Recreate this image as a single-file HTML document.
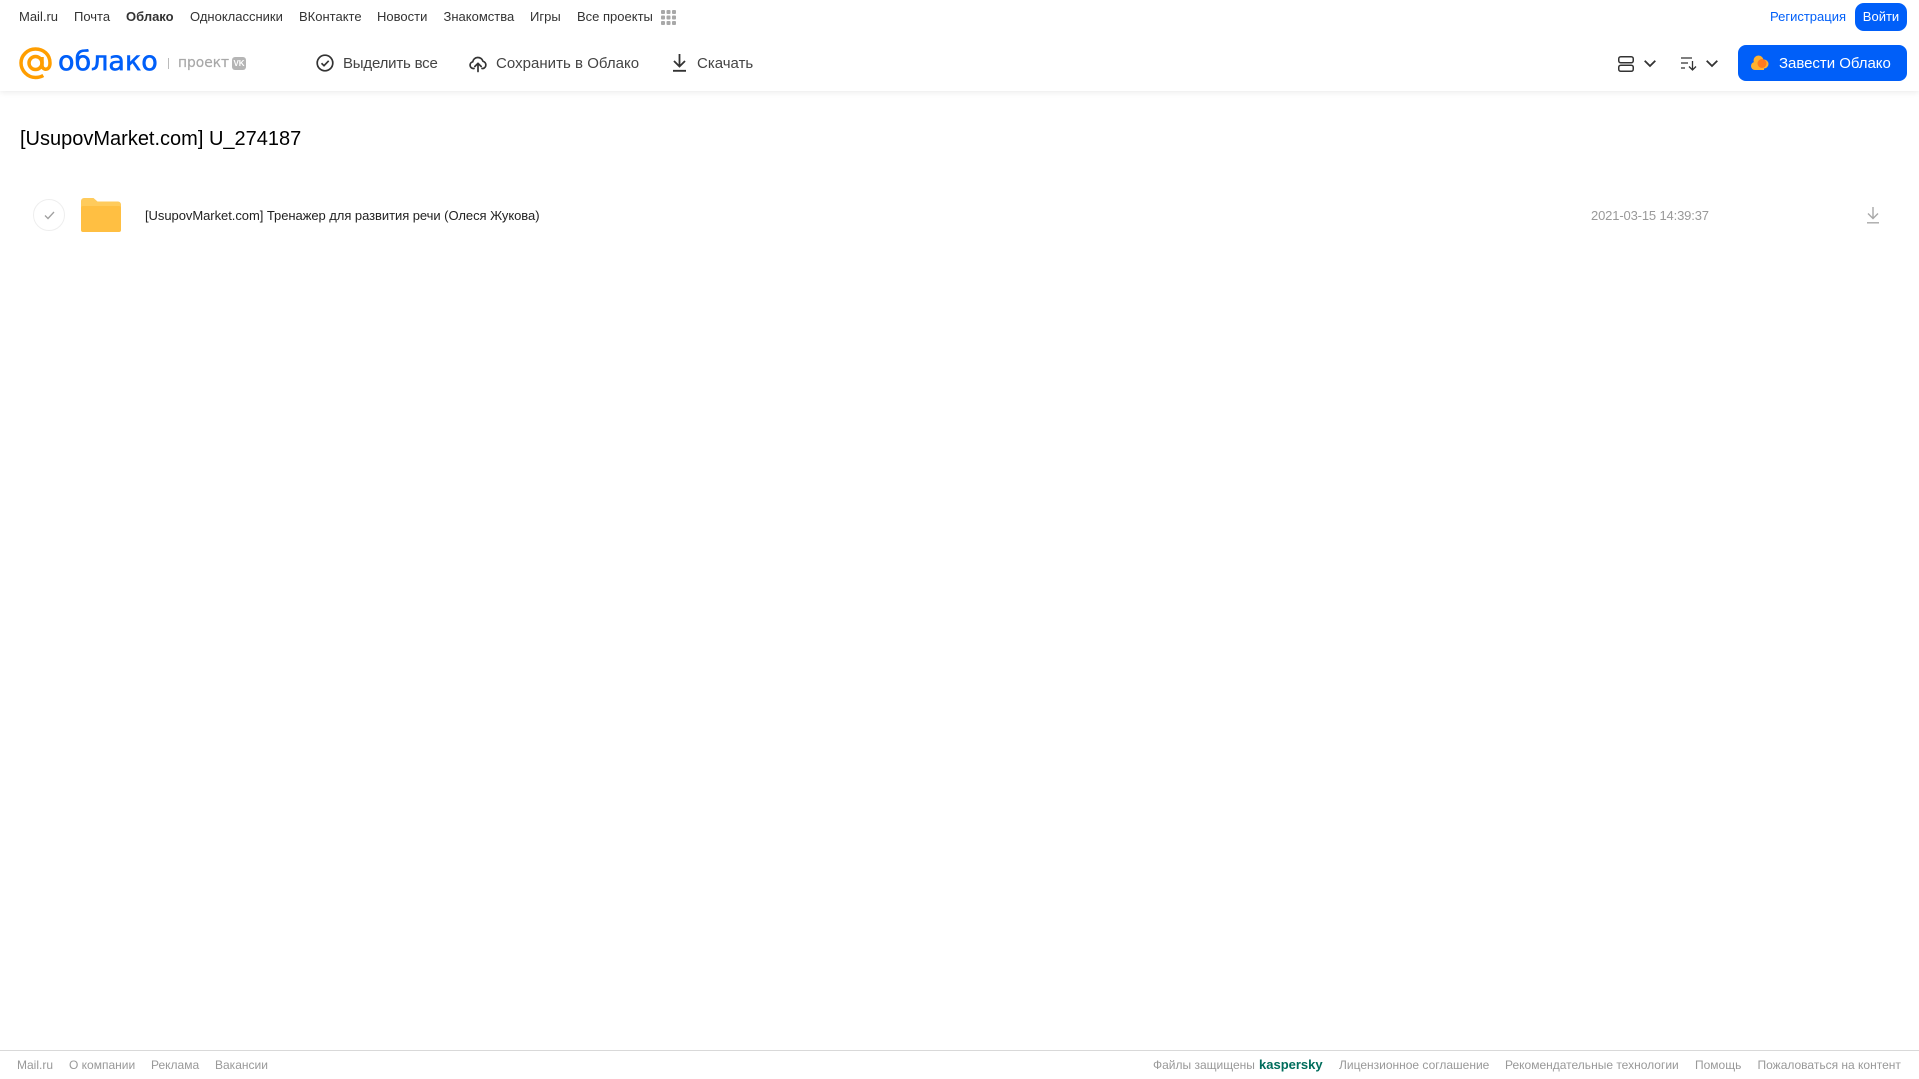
<!DOCTYPE html>
<html lang="ru"><head><meta charset="utf-8"><title>Облако</title>
<style>
html,body{margin:0;padding:0;background:#fff}
body{position:relative;width:1919px;height:1079px;overflow:hidden;font-family:"Liberation Sans",Arial,sans-serif}
.t{position:absolute;white-space:nowrap}
.n{font-size:13px;line-height:16px;top:9px;color:#333}
.b{font-size:15px;line-height:20px;top:53.500px;color:#444}
.f{font-size:12px;line-height:16px;top:1057px;color:#999}
svg{position:absolute;overflow:visible}
#sh{position:absolute;left:0;top:0;width:1919px;height:91px;background:#fff;box-shadow:0 1px 6px rgba(0,0,0,.09)}
</style></head><body>
<div id="sh"></div>
<span class="t n" style="left:19px">Mail.ru</span>
<span class="t n" style="left:74px">Почта</span>
<span class="t n" style="left:126px;font-weight:bold">Облако</span>
<span class="t n" style="left:190px">Одноклассники</span>
<span class="t n" style="left:299px">ВКонтакте</span>
<span class="t n" style="left:377px">Новости</span>
<span class="t n" style="left:443.500px">Знакомства</span>
<span class="t n" style="left:530px">Игры</span>
<span class="t n" style="left:577px">Все проекты</span>
<svg style="left:661px;top:10px" width="15" height="15" fill="#a8a8a8"><rect width="4" height="4" rx="1"/><rect x="5.500" width="4" height="4" rx="1"/><rect x="11" width="4" height="4" rx="1"/><rect y="5.500" width="4" height="4" rx="1"/><rect x="5.500" y="5.500" width="4" height="4" rx="1"/><rect x="11" y="5.500" width="4" height="4" rx="1"/><rect y="11" width="4" height="4" rx="1"/><rect x="5.500" y="11" width="4" height="4" rx="1"/><rect x="11" y="11" width="4" height="4" rx="1"/></svg>

<svg style="left:19px;top:47px" width="33" height="33" fill="none" stroke="#ff9e00" stroke-width="3.500"><circle cx="16.500" cy="16" r="6.500"/><path d="M23 10v8c0 2.800 1.800 4.200 3.800 4.200 2.500 0 4.200-2.400 4.200-6.200C31 7.500 24.500 2 16.500 2S2 8.500 2 16s6.500 14.500 14.500 14.500c3 0 5.500-.7 7.800-2"/></svg>
<span class="t" style="left:58px;top:44px;font-family:'DejaVu Sans',sans-serif;font-size:27px;line-height:36px;color:#005ff9;-webkit-text-stroke:.6px #005ff9">облако</span>
<div style="position:absolute;left:168px;top:58px;width:1px;height:11px;background:#bbb"></div>
<span class="t" style="left:178px;top:53px;font-family:'DejaVu Sans',sans-serif;font-size:13.800px;line-height:20px;color:#a8a8a8;-webkit-text-stroke:.2px #a8a8a8">проект</span>
<div class="t" style="left:232px;top:57px;width:14px;height:13px;border-radius:3px;background:#b5b5b5;color:#fff;font-size:8px;line-height:13px;text-align:center;font-weight:bold">VK</div>

<svg style="left:316px;top:54px" width="18" height="18" fill="none" stroke="#333" stroke-width="1.700"><circle cx="9" cy="9" r="7.800"/><path d="M5.500 9.300l2.500 2.400 4.700-4.900"/></svg>
<span class="t b" style="left:343px;letter-spacing:-.2px">Выделить все</span>
<svg style="left:469px;top:55px" width="18" height="17" fill="none" stroke="#333" stroke-width="1.700" stroke-linecap="round" stroke-linejoin="round"><path d="M5 13.500H4.200A3.400 3.400 0 0 1 3.700 6.800 5.300 5.300 0 0 1 14 6.300a3.700 3.700 0 0 1 0 7.200h-1"/><path d="M9 16.500V8.500M5.800 11.500L9 8.300l3.200 3.200"/></svg>
<span class="t b" style="left:496px;letter-spacing:.03px">Сохранить в Облако</span>
<svg style="left:672px;top:54px" width="15" height="18" fill="none" stroke="#333" stroke-width="1.800"><path d="M7.500 0v12M2 7l5.500 5.500L13 7M1 16.800h13"/></svg>
<span class="t b" style="left:697px">Скачать</span>

<span class="t n" style="left:1770px;color:#005ff9">Регистрация</span>
<div class="t" style="left:1855px;top:3px;width:52px;height:28px;border-radius:9px;background:#005ff9;color:#fff;font-size:13px;line-height:28px;text-align:center">Войти</div>

<svg style="left:1618px;top:56px" width="16" height="16" fill="none" stroke="#333" stroke-width="1.500"><rect x=".75" y=".75" width="14.500" height="6" rx="2"/><rect x=".75" y="9.250" width="14.500" height="6" rx="2"/></svg>
<svg style="left:1644px;top:60px" width="12" height="7" fill="none" stroke="#333" stroke-width="1.800"><path d="M.7.700L6 6l5.300-5.300"/></svg>
<svg style="left:1681px;top:57px" width="16" height="14" fill="none" stroke="#333" stroke-width="1.300"><path d="M0 1h11M0 6h7M0 11h4M11.500 4v9M8 9.500l3.500 3.500L15 9.500"/></svg>
<svg style="left:1706px;top:60px" width="12" height="7" fill="none" stroke="#333" stroke-width="1.800"><path d="M.7.700L6 6l5.300-5.300"/></svg>
<div style="position:absolute;left:1738px;top:45px;width:169px;height:36px;border-radius:8px;background:#005ff9"></div>
<svg style="left:1751px;top:55px" width="18" height="16"><g fill="#ffb12e"><circle cx="7.500" cy="5.500" r="5"/><circle cx="4" cy="11" r="4"/><circle cx="13" cy="9" r="4.500"/><rect x="4" y="9" width="9" height="6"/></g><circle cx="11" cy="8.500" r="4.500" fill="#ff7a1f"/></svg>
<span class="t" style="left:1779px;top:53.500px;font-size:15px;line-height:20px;color:#fff;letter-spacing:-.03px">Завести Облако</span>

<span class="t" style="left:20px;top:126.500px;font-size:20px;line-height:24px;color:#000">[UsupovMarket.com] U_274187</span>

<div style="position:absolute;left:33px;top:199px;width:30px;height:30px;border:1px solid #eee;border-radius:50%"></div>
<svg style="left:44px;top:211px" width="11" height="9" fill="none" stroke="#a0a0a0" stroke-width="1.300"><path d="M1 4.500l3 3L10 1"/></svg>
<svg style="left:81px;top:198px" width="40" height="34"><path d="M0 3a3 3 0 0 1 3-3h9.500l4 3.500H37a3 3 0 0 1 3 3v24.500a3 3 0 0 1-3 3H3a3 3 0 0 1-3-3z" fill="#ffcb5c"/><rect y="8" width="40" height="26" rx="2" fill="#ffbf42"/></svg>
<span class="t" style="left:145px;top:207px;font-size:13px;line-height:17px;color:#222;letter-spacing:-.05px">[UsupovMarket.com] Тренажер для развития речи (Олеся Жукова)</span>
<span class="t" style="left:1591px;top:207px;font-size:13px;line-height:17px;color:#999;letter-spacing:-.15px">2021-03-15 14:39:37</span>
<svg style="left:1866px;top:207px" width="14" height="17" fill="none" stroke="#a8a8a8" stroke-width="1.400"><path d="M7 0v11.500M2 6.500l5 5 5-5M1 15.800h12"/></svg>

<div style="position:absolute;left:0;top:1050px;width:1919px;height:1px;background:#d9d9d9"></div>
<span class="t f" style="left:17px">Mail.ru</span>
<span class="t f" style="left:69px">О компании</span>
<span class="t f" style="left:151px">Реклама</span>
<span class="t f" style="left:215px">Вакансии</span>
<span class="t f" style="left:1153px">Файлы защищены</span>
<span class="t f" style="left:1259px;font-weight:bold;color:#006d5c;font-size:13px">kaspersky</span>
<span class="t f" style="left:1339px">Лицензионное соглашение</span>
<span class="t f" style="left:1505px">Рекомендательные технологии</span>
<span class="t f" style="left:1695px">Помощь</span>
<span class="t f" style="left:1757.500px">Пожаловаться на контент</span>
</body></html>
